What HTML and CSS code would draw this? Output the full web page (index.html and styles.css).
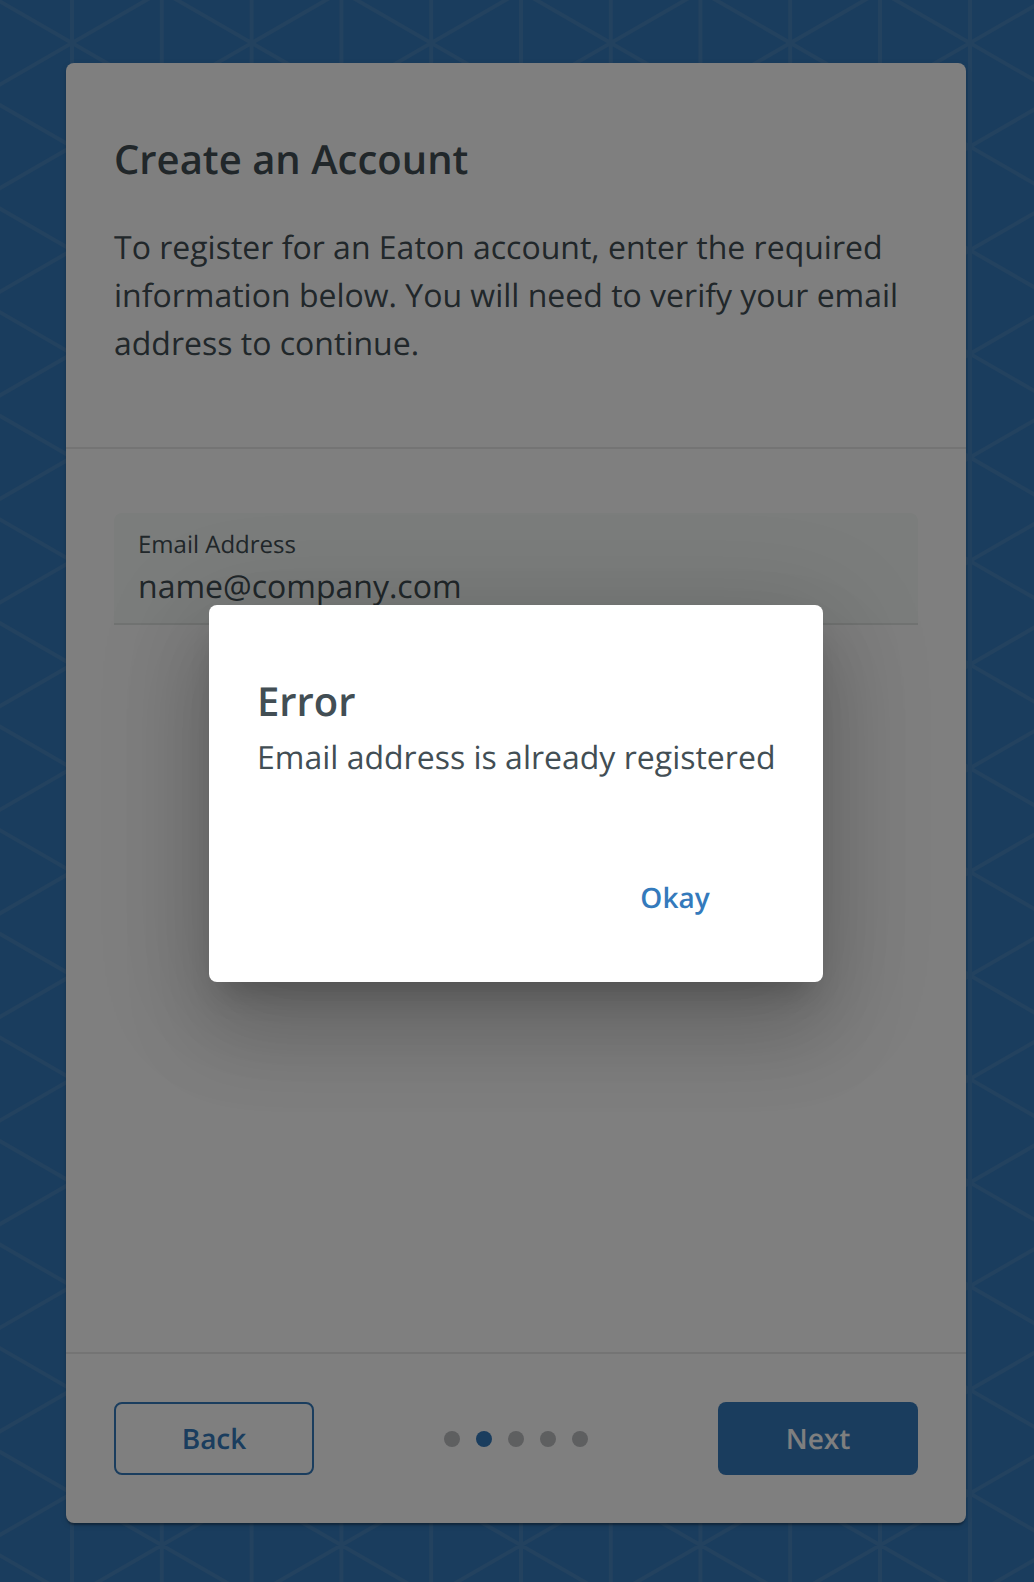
FILE: index.html
```html
<!DOCTYPE html>
<html lang="en">
<head>
<meta charset="utf-8">
<title>Create an Account</title>
<link rel="stylesheet" href="styles.css">
</head>
<body>
<svg class="backdrop" viewBox="0 0 1034 1582" aria-hidden="true">
  <path d="M72 0V1582M161.8 0V1582M251.6 0V1582M341.4 0V1582M431.2 0V1582M521 0V1582M610.8 0V1582M700.4 0V1582M790.2 0V1582M880 0V1582M970 0V1582
  M-17.8 -630.4l1077.6 621.6m-1077.6 -518l1077.6 621.6m-1077.6 -518l1077.6 621.6m-1077.6 -518l1077.6 621.6m-1077.6 -518l1077.6 621.6m-1077.6 -518l1077.6 621.6m-1077.6 -518l1077.6 621.6m-1077.6 -518l1077.6 621.6m-1077.6 -518l1077.6 621.6m-1077.6 -518l1077.6 621.6m-1077.6 -518l1077.6 621.6m-1077.6 -518l1077.6 621.6m-1077.6 -518l1077.6 621.6m-1077.6 -518l1077.6 621.6m-1077.6 -518l1077.6 621.6m-1077.6 -518l1077.6 621.6m-1077.6 -518l1077.6 621.6m-1077.6 -518l1077.6 621.6m-1077.6 -518l1077.6 621.6m-1077.6 -518l1077.6 621.6m-1077.6 -518l1077.6 621.6m-1077.6 -518l1077.6 621.6
  M-17.8 -8.8l1077.6 -621.6m-1077.6 725.2l1077.6 -621.6m-1077.6 725.2l1077.6 -621.6m-1077.6 725.2l1077.6 -621.6m-1077.6 725.2l1077.6 -621.6m-1077.6 725.2l1077.6 -621.6m-1077.6 725.2l1077.6 -621.6m-1077.6 725.2l1077.6 -621.6m-1077.6 725.2l1077.6 -621.6m-1077.6 725.2l1077.6 -621.6m-1077.6 725.2l1077.6 -621.6m-1077.6 725.2l1077.6 -621.6m-1077.6 725.2l1077.6 -621.6m-1077.6 725.2l1077.6 -621.6m-1077.6 725.2l1077.6 -621.6m-1077.6 725.2l1077.6 -621.6m-1077.6 725.2l1077.6 -621.6m-1077.6 725.2l1077.6 -621.6m-1077.6 725.2l1077.6 -621.6m-1077.6 725.2l1077.6 -621.6m-1077.6 725.2l1077.6 -621.6m-1077.6 725.2l1077.6 -621.6"/>
</svg>
<main class="card">
  <header class="intro">
    <h1 class="title">Create an Account</h1>
    <p class="text">To register for an Eaton account, enter the required information below. You will need to verify your email address to continue.</p>
  </header>
  <section class="content">
    <div class="field">
      <span class="field-label">Email Address</span>
      <span class="field-value">name@company.com</span>
    </div>
  </section>
  <footer class="actions">
    <button class="button outlined">Back</button>
    <div class="steps">
      <span class="dot"></span><span class="dot active"></span><span class="dot"></span><span class="dot"></span><span class="dot"></span>
    </div>
    <button class="button filled">Next</button>
  </footer>
</main>
<div class="overlay">
  <div class="dialog" role="dialog">
    <h2 class="title">Error</h2>
    <p class="text">Email address is already registered</p>
    <div class="dialog-actions"><button class="button plain">Okay</button></div>
  </div>
</div>
</body>
</html>
```
FILE: styles.css
```css
* { box-sizing: border-box; }

body {
  margin: 0;
  height: 1582px;
  padding: 63px 68px 59px 66px;
  overflow: hidden;
  background: #347abc;
  color: #424e54;
  font-family: "Open Sans", sans-serif;
  text-rendering: geometricPrecision;
}

.backdrop {
  position: absolute;
  inset: 0;
  width: 1034px;
  height: 1582px;
  fill: none;
  stroke: #4684be;
  stroke-width: 4;
}

.card {
  position: relative;
  display: flex;
  flex-direction: column;
  height: 1460px;
  border-radius: 8px;
  background: #fff;
  box-shadow: 0 4px 2px -2px rgba(0, 0, 0, .2), 0 2px 2px rgba(0, 0, 0, .14), 0 2px 6px rgba(0, 0, 0, .12);
}

.intro {
  height: 386px;
  padding: 64px 48px 0;
  border-bottom: 2px solid #e8e8e8;
}

.title {
  margin: 0;
  font-size: 40px;
  font-weight: 600;
  line-height: 64px;
}

.text {
  margin: 0;
  padding-top: 1px;
  font-size: 32px;
  line-height: 48px;
}

.intro .text { margin-top: 32px; }

.content {
  flex: 1;
  padding: 64px 48px;
}

.field {
  display: flex;
  flex-direction: column;
  height: 112px;
  padding: 15px 24px 0;
  border-bottom: 2px solid #e2e6e5;
  border-radius: 8px 8px 0 0;
  background: #f6faf8;
}

.field-label {
  font-size: 24px;
  line-height: 34px;
}

.field-value {
  margin-top: 1px;
  font-size: 32px;
  line-height: 48px;
}

.actions {
  display: flex;
  align-items: center;
  justify-content: space-between;
  height: 171px;
  padding: 0 48px;
  border-top: 2px solid #e8e8e8;
}

.button {
  width: 200px;
  height: 73px;
  padding: 0;
  border: 0;
  border-radius: 8px;
  font: 600 28px/49px "Open Sans", sans-serif;
  text-rendering: inherit;
}

.outlined {
  padding-top: 2px;
  border: 2px solid #347abc;
  background: none;
  color: #347abc;
}

.filled {
  padding-top: 2px;
  background: #347abc;
  color: #fff;
}

.steps {
  display: flex;
  gap: 16px;
}

.dot {
  width: 16px;
  height: 16px;
  border-radius: 50%;
  background: #bdbec1;
}

.dot.active { background: #347abc; }

.overlay {
  position: absolute;
  inset: 0;
  height: 1582px;
  padding-top: 605px;
  overflow: hidden;
  background: rgba(0, 0, 0, .5);
}

.dialog {
  width: 614px;
  height: 377px;
  margin-left: 209px;
  padding: 64px 48px 0;
  border-radius: 8px;
  background: #fff;
  white-space: nowrap;
  box-shadow: 0 22px 30px -14px rgba(0, 0, 0, .2), 0 48px 84px 6px rgba(0, 0, 0, .14), 0 18px 104px 16px rgba(0, 0, 0, .12);
}

.dialog-actions {
  display: flex;
  justify-content: flex-end;
  padding-top: 80px;
}

.plain {
  background: none;
  color: #347abc;
}
```
